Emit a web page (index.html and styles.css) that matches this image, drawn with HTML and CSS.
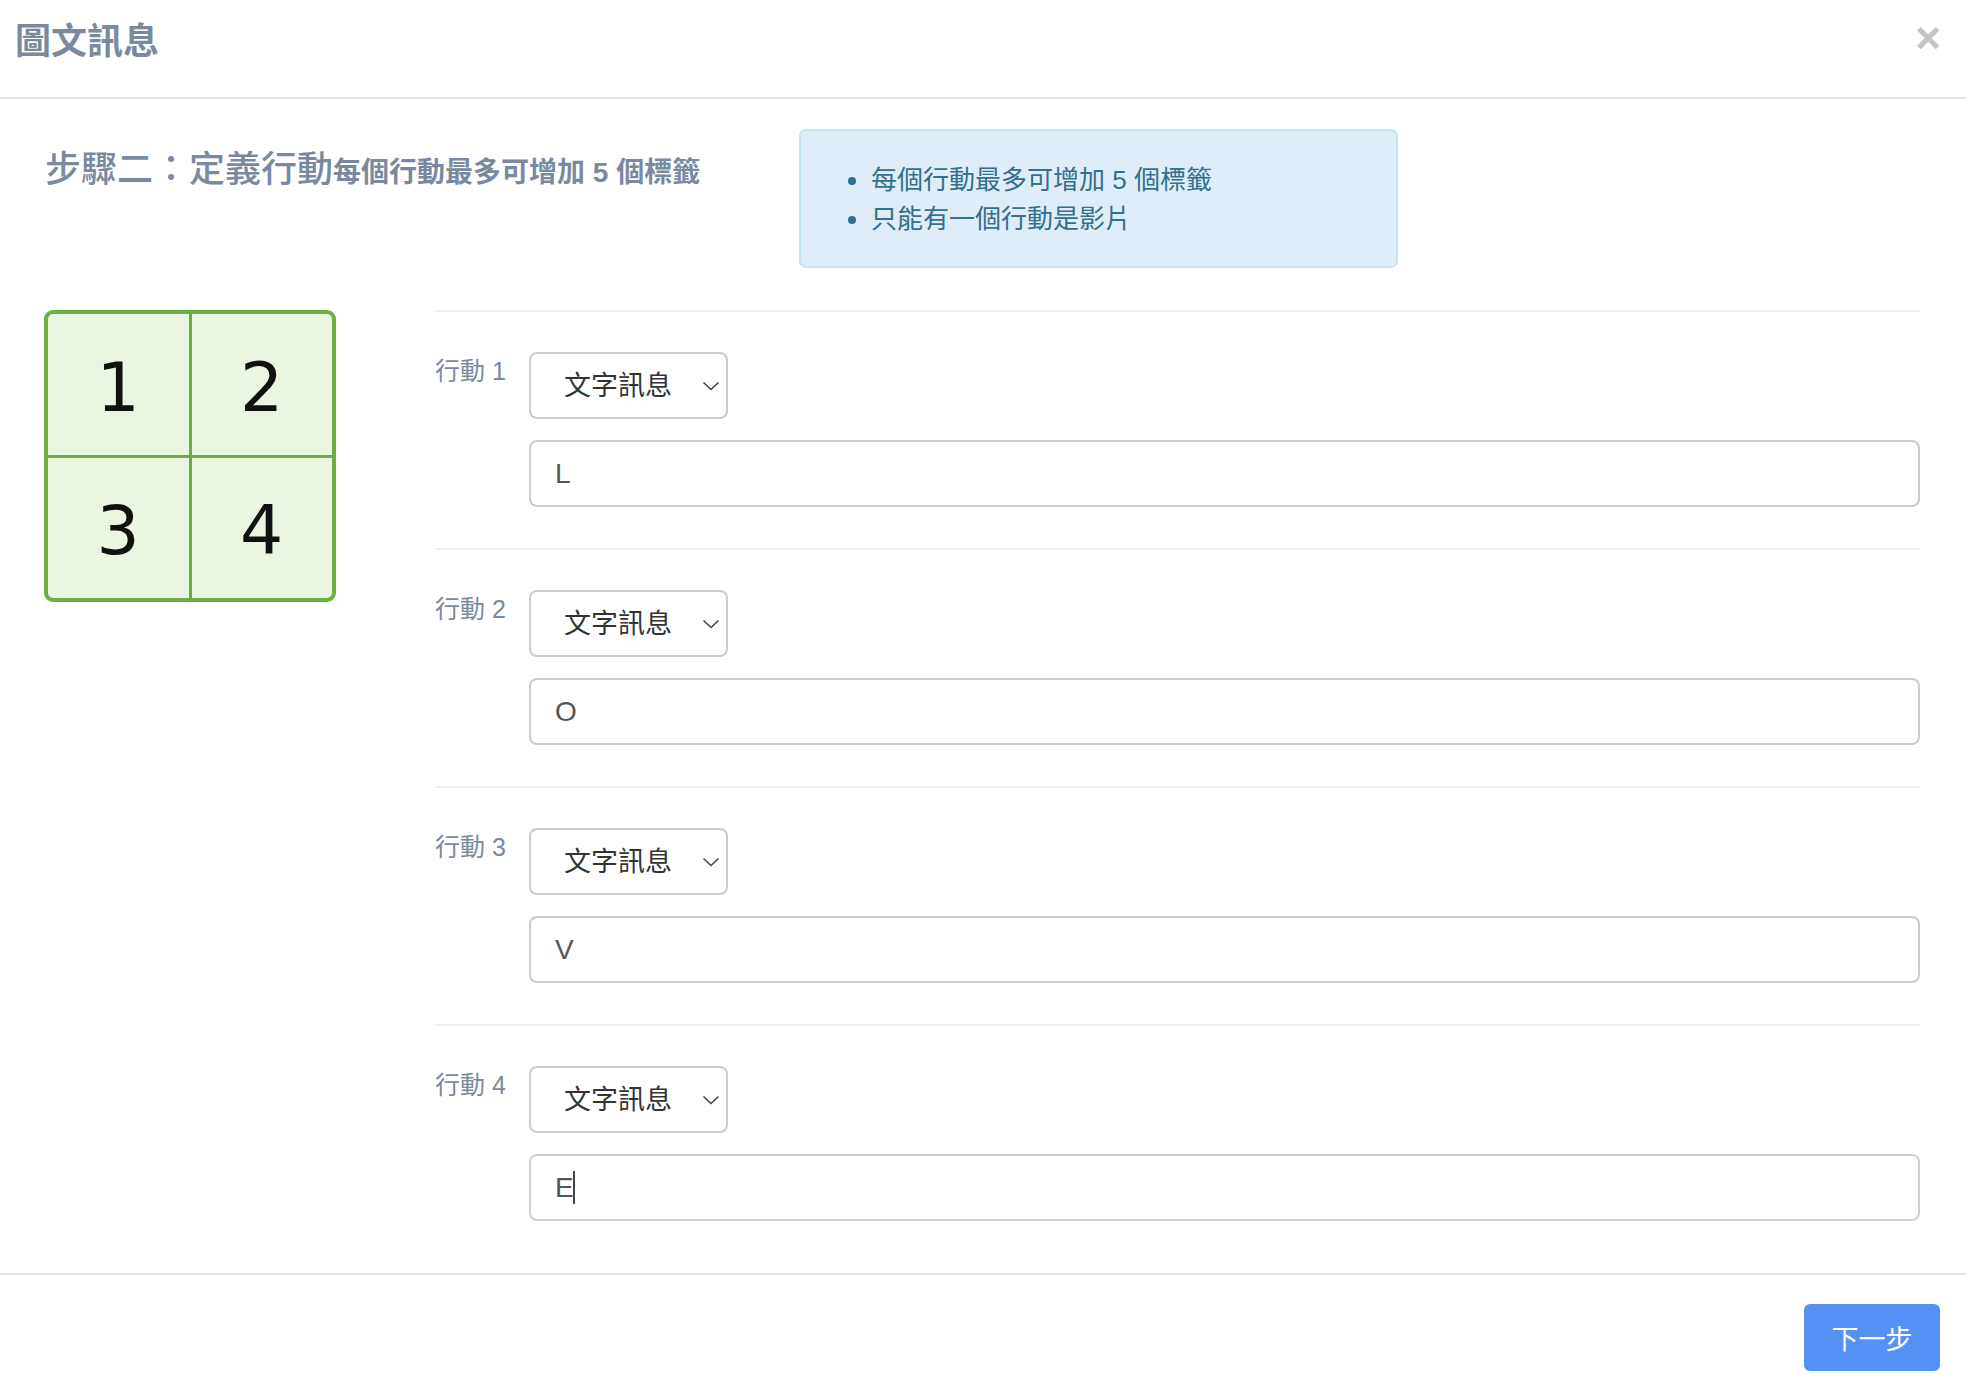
FILE: index.html
```html
<!DOCTYPE html>
<html lang="zh-Hant">
<head>
<meta charset="utf-8">
<title>圖文訊息</title>
<link rel="stylesheet" href="styles.css">
</head>
<body>
<div class="modal">
  <header class="modal-header">
    <h4 class="modal-title">圖文訊息</h4>
    <button class="close" type="button">×</button>
  </header>
  <main class="modal-body">
    <section class="intro">
      <h3 class="step-title">步驟二：定義行動<small class="step-sub">每個行動最多可增加 5 個標籤</small></h3>
      <div class="alert">
        <ul class="alert-list">
          <li>每個行動最多可增加 5 個標籤</li>
          <li>只能有一個行動是影片</li>
        </ul>
      </div>
    </section>
    <section class="editor">
      <div class="layout-col">
        <div class="tiles">
          <div class="tile">1</div>
          <div class="tile">2</div>
          <div class="tile">3</div>
          <div class="tile">4</div>
        </div>
      </div>
      <div class="actions">
        <div class="action">
          <label class="action-label">行動 1</label>
          <div class="action-fields">
            <div class="select-wrap">
              <select class="select"><option>文字訊息</option></select>
              <svg class="chev" width="18" height="10" viewBox="0 0 18 10"><path d="M1.5 1.5 L9 8.5 L16.5 1.5" fill="none" stroke="#444" stroke-width="1.6"/></svg>
            </div>
            <input class="text-input" type="text" value="L">
          </div>
        </div>
        <div class="action">
          <label class="action-label">行動 2</label>
          <div class="action-fields">
            <div class="select-wrap">
              <select class="select"><option>文字訊息</option></select>
              <svg class="chev" width="18" height="10" viewBox="0 0 18 10"><path d="M1.5 1.5 L9 8.5 L16.5 1.5" fill="none" stroke="#444" stroke-width="1.6"/></svg>
            </div>
            <input class="text-input" type="text" value="O">
          </div>
        </div>
        <div class="action">
          <label class="action-label">行動 3</label>
          <div class="action-fields">
            <div class="select-wrap">
              <select class="select"><option>文字訊息</option></select>
              <svg class="chev" width="18" height="10" viewBox="0 0 18 10"><path d="M1.5 1.5 L9 8.5 L16.5 1.5" fill="none" stroke="#444" stroke-width="1.6"/></svg>
            </div>
            <input class="text-input" type="text" value="V">
          </div>
        </div>
        <div class="action last">
          <label class="action-label">行動 4</label>
          <div class="action-fields">
            <div class="select-wrap">
              <select class="select"><option>文字訊息</option></select>
              <svg class="chev" width="18" height="10" viewBox="0 0 18 10"><path d="M1.5 1.5 L9 8.5 L16.5 1.5" fill="none" stroke="#444" stroke-width="1.6"/></svg>
            </div>
            <div class="text-input focused">E<span class="caret"></span></div>
          </div>
        </div>
      </div>
    </section>
  </main>
  <footer class="modal-footer">
    <button class="btn-next" type="button">下一步</button>
  </footer>
</div>
</body>
</html>
```

FILE: styles.css
```css
* { box-sizing: border-box; }
html, body { margin: 0; padding: 0; background: #fff; }
body {
  font-family: "Liberation Sans", "Noto Sans CJK TC", sans-serif;
  color: #333;
  width: 1966px;
  height: 1386px;
  overflow: hidden;
}
.modal { width: 1966px; }

.modal-header {
  height: 99px;
  border-bottom: 2px solid #e5e5e5;
  display: flex;
  justify-content: space-between;
  align-items: flex-start;
  padding: 17px 25px 0 15px;
}
.modal-title {
  margin: 0;
  font-size: 36px;
  line-height: 50px;
  font-weight: 700;
  color: #7a89a0;
}
.close {
  border: 0;
  background: transparent;
  padding: 0;
  margin: 0;
  font-family: "Liberation Sans", sans-serif;
  font-size: 44px;
  font-weight: 700;
  line-height: 42px;
  color: #c4c4c4;
}

.modal-body { padding: 0 46px 0 45px; }

.intro {
  display: flex;
  padding-top: 30px;
}
.step-title {
  width: 754px;
  margin: 20px 0 0 0;
  font-size: 36px;
  line-height: 42px;
  font-weight: 500;
  color: #7a89a0;
}
.step-sub {
  font-size: 28px;
  font-weight: 700;
  color: #7a89a0;
}
.alert {
  width: 599px;
  height: 139px;
  background: #deedf7;
  border: 2px solid #c3e6f0;
  border-radius: 7px;
  padding: 30px 30px 28px;
  color: #31708f;
}
.alert-list {
  margin: 0;
  padding-left: 40px;
  font-size: 26px;
  line-height: 39px;
}

.editor {
  display: flex;
  margin-top: 42px;
}
.layout-col { width: 390px; flex: none; }
.tiles {
  width: 292px;
  height: 292px;
  margin-left: -1px;
  display: grid;
  grid-template-columns: 1fr 1fr;
  grid-template-rows: 1fr 1fr;
  gap: 3px;
  background: #6aaf3f;
  border: 4px solid #6aaf3f;
  border-radius: 9px;
  overflow: hidden;
}
.tile {
  background: #eaf6e1;
  display: flex;
  align-items: center;
  justify-content: center;
  font-family: "DejaVu Sans", "Lato", sans-serif;
  font-size: 68px;
  color: #111;
  padding-top: 6px;
}

.actions { flex: 1; }
.action {
  display: flex;
  border-top: 2px solid #eeeeee;
  padding: 40px 0 41px;
}
.action.last { padding-bottom: 52px; }
.action-label {
  width: 94px;
  flex: none;
  font-family: "Liberation Sans", "Noto Sans CJK TC", sans-serif;
  font-size: 25px;
  line-height: 34px;
  padding-top: 2px;
  color: #7a89a0;
}
.action-fields {
  flex: 1;
  display: flex;
  flex-direction: column;
  gap: 21px;
}
.select-wrap {
  position: relative;
  width: 199px;
  height: 67px;
}
.select {
  -webkit-appearance: none;
  appearance: none;
  width: 199px;
  height: 67px;
  border: 2px solid #cccccc;
  border-radius: 8px;
  background: #fff;
  padding: 0 0 0 33px;
  font-family: "Liberation Sans", "Noto Sans CJK TC", sans-serif;
  font-size: 27px;
  color: #333;
}
.chev {
  position: absolute;
  right: 8px;
  top: 29px;
}
.text-input {
  display: flex;
  align-items: center;
  width: 100%;
  height: 67px;
  border: 2px solid #cccccc;
  border-radius: 8px;
  background: #fff;
  padding: 0 24px;
  font-family: "Liberation Sans", "Noto Sans CJK TC", sans-serif;
  font-size: 28px;
  color: #555;
  outline: none;
}
.text-input.focused { border-color: #cdd1d6; }
.caret {
  display: inline-block;
  width: 2px;
  height: 33px;
  background: #444;
  margin-left: -1px;
}

.modal-footer {
  border-top: 2px solid #e5e5e5;
  display: flex;
  justify-content: flex-end;
  padding: 29px 26px 0 0;
}
.btn-next {
  width: 136px;
  height: 67px;
  border: 0;
  border-radius: 6px;
  background: #5591f5;
  color: #fff;
  font-family: "Liberation Sans", "Noto Sans CJK TC", sans-serif;
  font-size: 27px;
  padding: 0;
}
```
